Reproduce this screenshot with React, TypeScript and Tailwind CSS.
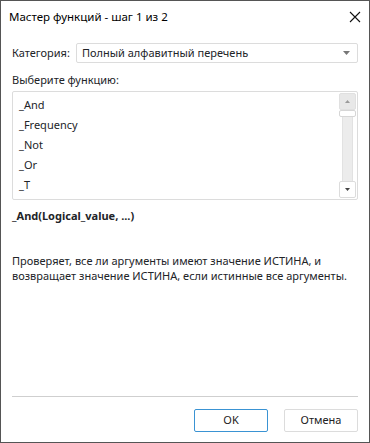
import React from "react";

export default function App() {
  const items = ["_And", "_Frequency", "_Not", "_Or", "_T"];
  return (
    <div
      className="w-[370px] h-[443px] bg-white border border-[#555555] flex flex-col text-[#222428] text-[11px]"
      style={{ fontFamily: '"Noto Sans", "Open Sans", sans-serif' }}
    >
      {/* Title bar */}
      <div className="h-[31px] flex items-center justify-between pl-[8px] pr-[6px] shrink-0">
        <span className="text-[11.5px] text-black">Мастер функций - шаг 1 из 2</span>
        <svg width="14" height="14" viewBox="0 0 14 14" className="mr-[1px]">
          <path d="M2 2 L12 12 M12 2 L2 12" stroke="#111" strokeWidth="1.1" />
        </svg>
      </div>

      <div className="flex flex-col px-[11px] flex-1">
        {/* Category */}
        <div className="flex items-center mt-[11px] gap-[6px]">
          <span className="leading-[20px] whitespace-nowrap">Категория:</span>
          <div className="flex-1 h-[20px] border border-[#dcdcdc] rounded-[2px] flex items-center justify-between pl-[5px] pr-[7px]">
            <span className="leading-[18px] whitespace-nowrap">Полный алфавитный перечень</span>
            <svg width="7" height="4" viewBox="0 0 7 4">
              <path d="M0 0 L7 0 L3.5 4 Z" fill="#777" />
            </svg>
          </div>
        </div>

        <div className="mt-[8px] leading-[18px]">Выберите функцию:</div>

        {/* List */}
        <div className="mt-[2px] h-[109px] border border-[#dcdcdc] rounded-[2px] flex">
          <div className="flex-1 flex flex-col pt-[3px] pl-[6px]">
            {items.map((it) => (
              <div key={it} className="h-[20px] leading-[20px]">
                {it}
              </div>
            ))}
          </div>
          <div className="w-[18px] mr-[1px] flex flex-col items-center pt-[1px] pb-[1px]">
            <div className="w-[17px] h-[17px] rounded-[2px] bg-[#e8e8e8] border border-[#e0e0e0] flex items-center justify-center">
              <svg width="5" height="3" viewBox="0 0 5 3">
                <path d="M0 3 L5 3 L2.5 0 Z" fill="#9a9a9a" />
              </svg>
            </div>
            <div className="w-[17px] h-[7px] rounded-[2px] bg-white border border-[#d6d6d6]" />
            <div className="w-[11px] flex-1 bg-[#ececec] border-x border-[#e2e2e2]" />
            <div className="w-[17px] h-[17px] rounded-[2px] bg-white border border-[#dcdcdc] flex items-center justify-center">
              <svg width="5" height="3" viewBox="0 0 5 3">
                <path d="M0 0 L5 0 L2.5 3 Z" fill="#444" />
              </svg>
            </div>
          </div>
        </div>

        <div className="mt-[7px] font-bold leading-[18px]">_And(Logical_value, ...)</div>

        <div className="mt-[28px] leading-[15px] whitespace-nowrap">
          Проверяет, все ли аргументы имеют значение ИСТИНА, и
          <br />
          возвращает значение ИСТИНА, если истинные все аргументы.
        </div>

        <div className="flex-1" />

        <div className="h-px bg-[#cfcfcf] mb-[12px]" />

        <div className="flex justify-end gap-[16px] mb-[10px]">
          <button className="w-[74px] h-[23px] border border-[#3a93d3] rounded-[2px] bg-white text-[#222]">
            OK
          </button>
          <button className="w-[74px] h-[23px] border border-[#dcdcdc] rounded-[2px] bg-white text-[#222]">
            Отмена
          </button>
        </div>
      </div>
    </div>
  );
}
